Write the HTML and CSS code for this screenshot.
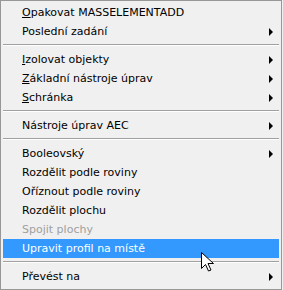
FILE: index.html
```html
<!DOCTYPE html>
<html lang="cs">
<head>
    <meta charset="UTF-8">
    <title>Menu</title>
    <link rel="stylesheet" href="styles.css">
</head>
<body>
    <div class="menu">
        <div class="item"><span><u>O</u>pakovat MASSELEMENTADD</span></div>
        <div class="item sub"><span>Poslední zadání</span></div>
        <div class="sep"></div>
        <div class="item sub"><span><u>I</u>zolovat objekty</span></div>
        <div class="item sub"><span><u>Z</u>ákladní nástroje úprav</span></div>
        <div class="item sub"><span><u>S</u>chránka</span></div>
        <div class="sep"></div>
        <div class="item sub"><span>Nástroje úprav AEC</span></div>
        <div class="sep"></div>
        <div class="item sub"><span>Booleovský</span></div>
        <div class="item"><span>Rozdělit podle roviny</span></div>
        <div class="item"><span>Oříznout podle roviny</span></div>
        <div class="item"><span>Rozdělit plochu</span></div>
        <div class="item disabled"><span>Spojit plochy</span></div>
        <div class="item active"><span>Upravit profil na místě</span></div>
        <div class="sep"></div>
        <div class="item sub"><span>Převést na</span></div>

        <!-- mouse pointer -->
        <svg class="cursor" width="13" height="20" viewBox="0 0 13 20">
            <path d="M0.5 0.5 L0.5 16.5 L4.5 12.5 L7.5 19 L10 18 L7 11.5 L12.5 11.5 Z" fill="#fff" stroke="#000" stroke-width="1"/>
        </svg>
    </div>
</body>
</html>
```

FILE: styles.css
```css
body{
    margin: 0;
    background-color: #f0f0f0;
}
.menu{
    position: relative;
    box-sizing: border-box;
    width: 282px;
    height: 290px;
    border: 1px solid #979797;
    padding: 2px;
    background-color: #f0f0f0;
    font-family: 'DejaVu Sans', Tahoma, sans-serif;
    font-size: 11px;
    color: #000;
}
.item{
    display: flex;
    align-items: center;
    height: 19px;
    padding-left: 19px;
    padding-right: 6px;
    white-space: nowrap;
}
.item u{
    text-decoration: underline;
}
.sub::after{
    content: "";
    margin-left: auto;
    width: 0;
    height: 0;
    border-left: 4px solid #000;
    border-top: 4px solid transparent;
    border-bottom: 4px solid transparent;
}
.disabled{
    color: #a0a0a0;
}
.active{
    background-color: #3399ff;
    color: #fff;
}
.sep{
    margin: 3px 0 4px;
    border-top: 1px solid #a0a0a0;
    border-bottom: 1px solid #ffffff;
}
.cursor{
    position: absolute;
    left: 200px;
    top: 251px;
}
```
